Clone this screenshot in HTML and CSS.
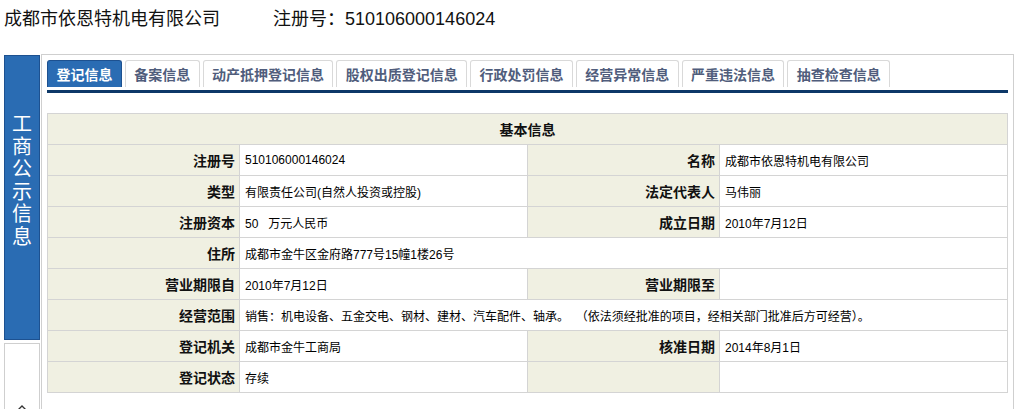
FILE: index.html
```html
<!DOCTYPE html>
<html lang="zh-CN">
<head>
  <meta charset="UTF-8">
  <title>成都市依恩特机电有限公司</title>
  <link rel="stylesheet" href="styles.css">
</head>
<body>
  <div class="title">
    <span class="company">成都市依恩特机电有限公司</span>
    <span class="regno">注册号：510106000146024</span>
  </div>

  <div class="layout">
    <div class="side">
      <div class="side-tab"><span>工商公示信息</span></div>
      <div class="side-up">
        <svg width="16" height="10" viewBox="0 0 16 10">
          <polyline points="1,9 8,2 15,9" fill="none" stroke="#333" stroke-width="1.3"/>
        </svg>
      </div>
    </div>

    <div class="frame">
      <ul class="tabs">
        <li class="tab active">登记信息</li>
        <li class="tab">备案信息</li>
        <li class="tab">动产抵押登记信息</li>
        <li class="tab">股权出质登记信息</li>
        <li class="tab">行政处罚信息</li>
        <li class="tab">经营异常信息</li>
        <li class="tab">严重违法信息</li>
        <li class="tab">抽查检查信息</li>
      </ul>

      <table class="info">
        <colgroup>
          <col class="c-label"><col class="c-value"><col class="c-label"><col class="c-value-last">
        </colgroup>
        <tr><th colspan="4" class="caption">基本信息</th></tr>
        <tr>
          <th>注册号</th><td>510106000146024</td>
          <th>名称</th><td>成都市依恩特机电有限公司</td>
        </tr>
        <tr>
          <th>类型</th><td>有限责任公司(自然人投资或控股)</td>
          <th>法定代表人</th><td>马伟丽</td>
        </tr>
        <tr>
          <th>注册资本</th><td>50&nbsp;&nbsp;&nbsp;万元人民币</td>
          <th>成立日期</th><td>2010年7月12日</td>
        </tr>
        <tr>
          <th>住所</th><td colspan="3">成都市金牛区金府路777号15幢1楼26号</td>
        </tr>
        <tr>
          <th>营业期限自</th><td>2010年7月12日</td>
          <th>营业期限至</th><td></td>
        </tr>
        <tr>
          <th>经营范围</th><td colspan="3">销售：机电设备、五金交电、钢材、建材、汽车配件、轴承。&nbsp;&nbsp;（依法须经批准的项目，经相关部门批准后方可经营）。</td>
        </tr>
        <tr>
          <th>登记机关</th><td>成都市金牛工商局</td>
          <th>核准日期</th><td>2014年8月1日</td>
        </tr>
        <tr>
          <th>登记状态</th><td>存续</td>
          <th></th><td></td>
        </tr>
      </table>
    </div>
  </div>
</body>
</html>
```

FILE: styles.css
```css
body {
  margin: 0;
  font-family: "Liberation Sans", "Noto Sans CJK SC", sans-serif;
  color: #000;
  background: #fff;
  overflow: hidden;
}

.title {
  height: 54px;
  line-height: 38px;
  padding-left: 4px;
  font-size: 18px;
  color: #111;
}

.regno {
  margin-left: 48px;
}

.layout {
  display: flex;
  align-items: flex-start;
}

/* left vertical tab */
.side {
  width: 37px;
  margin-left: 4px;
  padding-top: 1px;
  display: flex;
  flex-direction: column;
  gap: 3px;
}

.side-tab {
  height: 285px;
  background-color: #2a6cb3;
  border: 1px solid #1d5190;
  color: #fff;
  font-size: 20px;
  line-height: 22.5px;
  padding-top: 56px;
  box-sizing: border-box;
  display: flex;
  justify-content: center;
}

.side-tab span {
  width: 20px;
  font-family: "Noto Sans CJK SC", sans-serif;
}

.side-up {
  height: 90px;
  border: 1px solid #cfcfcf;
  background: #fff;
  box-sizing: border-box;
  padding-top: 56px;
  text-align: center;
}

/* main frame */
.frame {
  flex: 1;
  margin-left: 1px;
  margin-right: 7px;
  border: 1px solid #cfcfcf;
  border-bottom: none;
  padding: 5px 5px 40px 5px;
  height: 400px;
}

.tabs {
  list-style: none;
  margin: 0;
  padding: 0 0 3px 0;
  display: flex;
  gap: 3px;
  border-bottom: 3px solid #0d3868;
}

.tab {
  height: 27px;
  line-height: 27px;
  padding: 0 8.4px;
  border: 1px solid #d9d9d9;
  border-bottom: none;
  border-radius: 3px 3px 0 0;
  box-sizing: border-box;
  font-family: "Noto Sans CJK SC", sans-serif;
  font-size: 14px;
  font-weight: bold;
  color: #505d7c;
  background: #fff;
}

.tab.active {
  background-color: #2a6cb3;
  border-color: #1d5190;
  color: #fff;
}

/* info table */
.info {
  margin-top: 20px;
  width: 960px;
  border-collapse: collapse;
  table-layout: fixed;
}

.c-label { width: 192px; }
.c-value { width: 288px; }
.c-value-last { width: 288px; }

.info th,
.info td {
  height: 30px;
  border: 1px solid #d4d4d4;
  padding: 0;
}

.info th {
  background-color: #f0f0e2;
  font-family: "Noto Sans CJK SC", sans-serif;
  font-size: 14px;
  font-weight: bold;
  text-align: right;
  padding-right: 4px;
  color: #111;
}

.info th.caption {
  text-align: center;
  padding-right: 0;
}

.info td {
  font-size: 12px;
  padding-left: 5px;
  background: #fff;
}
```
